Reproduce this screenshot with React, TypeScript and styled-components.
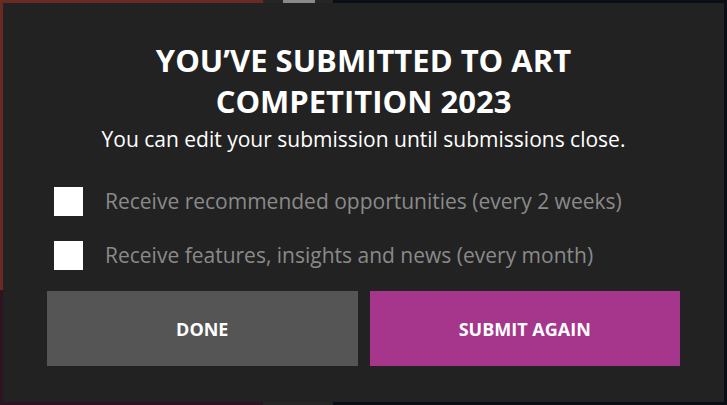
import React from "react";
import styled, { createGlobalStyle } from "styled-components";

const GlobalStyle = createGlobalStyle`
  html, body {
    margin: 0;
    padding: 0;
  }

  body {
    width: 727px;
    height: 405px;
    overflow: hidden;
    font-family: "Open Sans", "Noto Sans", sans-serif;
  }
`;

const Backdrop = styled.div`
  width: 727px;
  height: 405px;
  box-sizing: border-box;
  padding: 3px;
  background:
    linear-gradient(#6a2a24, #6a2a24) 0 0 / 263px 290px no-repeat,
    linear-gradient(#2e1420, #2e1420) 0 290px / 263px 115px no-repeat,
    linear-gradient(#8a8a8a, #8a8a8a) 283px 0 / 32px 3px no-repeat,
    linear-gradient(#262626, #262626) 263px 0 / 70px 405px no-repeat,
    #0a0f16;
`;

const Modal = styled.div`
  height: 100%;
  box-sizing: border-box;
  background: #222222;
  padding: 37px 44px 36px;
  display: flex;
  flex-direction: column;
  color: #fff;
`;

const Title = styled.h1`
  margin: 0;
  font-size: 31px;
  line-height: 41px;
  font-weight: 700;
  text-align: center;
  text-transform: uppercase;
`;

const Subtitle = styled.p`
  margin: 2px 0 0;
  font-size: 21px;
  line-height: 30px;
  text-align: center;
`;

const Options = styled.div`
  display: flex;
  flex-direction: column;
  gap: 25px;
  margin-top: 33px;
  padding-left: 7px;
`;

const Option = styled.label`
  display: flex;
  align-items: center;
  gap: 22px;
  font-size: 21px;
  line-height: 29px;
  color: #8a8a8a;
`;

const Box = styled.span`
  width: 29px;
  height: 29px;
  background: #fff;
  flex-shrink: 0;
`;

const Actions = styled.div`
  display: grid;
  grid-template-columns: 1fr 1fr;
  gap: 12px;
  margin-top: auto;
`;

const Button = styled.button<{ $primary?: boolean }>`
  height: 75px;
  border: 0;
  background: ${(p) => (p.$primary ? "#a5368b" : "#555555")};
  color: #fff;
  font-family: "Open Sans", "Noto Sans", sans-serif;
  font-size: 18px;
  font-weight: 700;
  text-transform: uppercase;
`;

const App = () => {
  return (
    <>
      <GlobalStyle />
      <Backdrop>
        <Modal>
          <Title>
            You’ve submitted to art
            <br />
            competition 2023
          </Title>
          <Subtitle>You can edit your submission until submissions close.</Subtitle>
          <Options>
            <Option>
              <Box />
              Receive recommended opportunities (every 2 weeks)
            </Option>
            <Option>
              <Box />
              Receive features, insights and news (every month)
            </Option>
          </Options>
          <Actions>
            <Button>Done</Button>
            <Button $primary>Submit again</Button>
          </Actions>
        </Modal>
      </Backdrop>
    </>
  );
};

export default App;
